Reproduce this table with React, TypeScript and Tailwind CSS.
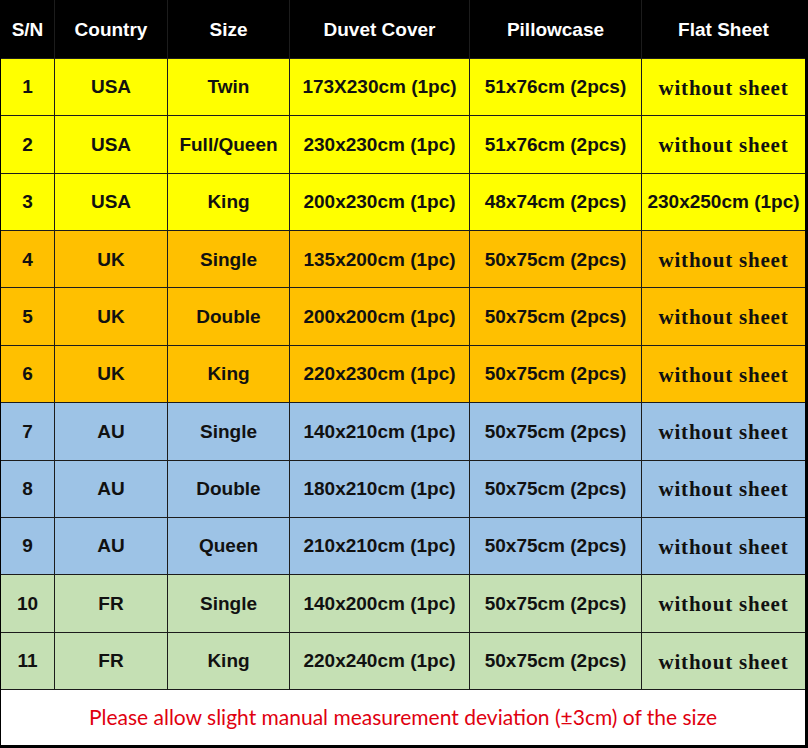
import React from 'react';

type Row = {
  sn: string;
  country: string;
  size: string;
  duvet: string;
  pillow: string;
  sheet: string;
  bg: string;
};

const rows: Row[] = [
  { sn: '1', country: 'USA', size: 'Twin', duvet: '173X230cm (1pc)', pillow: '51x76cm (2pcs)', sheet: 'without sheet', bg: 'bg-[#ffff00]' },
  { sn: '2', country: 'USA', size: 'Full/Queen', duvet: '230x230cm (1pc)', pillow: '51x76cm (2pcs)', sheet: 'without sheet', bg: 'bg-[#ffff00]' },
  { sn: '3', country: 'USA', size: 'King', duvet: '200x230cm (1pc)', pillow: '48x74cm (2pcs)', sheet: '230x250cm (1pc)', bg: 'bg-[#ffff00]' },
  { sn: '4', country: 'UK', size: 'Single', duvet: '135x200cm (1pc)', pillow: '50x75cm (2pcs)', sheet: 'without sheet', bg: 'bg-[#ffc000]' },
  { sn: '5', country: 'UK', size: 'Double', duvet: '200x200cm (1pc)', pillow: '50x75cm (2pcs)', sheet: 'without sheet', bg: 'bg-[#ffc000]' },
  { sn: '6', country: 'UK', size: 'King', duvet: '220x230cm (1pc)', pillow: '50x75cm (2pcs)', sheet: 'without sheet', bg: 'bg-[#ffc000]' },
  { sn: '7', country: 'AU', size: 'Single', duvet: '140x210cm (1pc)', pillow: '50x75cm (2pcs)', sheet: 'without sheet', bg: 'bg-[#9dc3e6]' },
  { sn: '8', country: 'AU', size: 'Double', duvet: '180x210cm (1pc)', pillow: '50x75cm (2pcs)', sheet: 'without sheet', bg: 'bg-[#9dc3e6]' },
  { sn: '9', country: 'AU', size: 'Queen', duvet: '210x210cm (1pc)', pillow: '50x75cm (2pcs)', sheet: 'without sheet', bg: 'bg-[#9dc3e6]' },
  { sn: '10', country: 'FR', size: 'Single', duvet: '140x200cm (1pc)', pillow: '50x75cm (2pcs)', sheet: 'without sheet', bg: 'bg-[#c5e0b4]' },
  { sn: '11', country: 'FR', size: 'King', duvet: '220x240cm (1pc)', pillow: '50x75cm (2pcs)', sheet: 'without sheet', bg: 'bg-[#c5e0b4]' },
];

const headers = ['S/N', 'Country', 'Size', 'Duvet Cover', 'Pillowcase', 'Flat Sheet'];

const sans = "font-['Liberation_Sans',Arial,sans-serif]";

export default function App() {
  return (
    <div className="w-[808px] h-[748px] bg-black pl-px pr-[3px] pb-[3px]">
      <div className="grid h-[745px] grid-cols-[53px_112px_121px_179px_171px_163px] grid-rows-[58px_repeat(11,1fr)_55px] gap-px bg-[#1c1c1c]">
        {headers.map((h) => (
          <div key={h} className={`flex items-center justify-center bg-black pt-[3px] text-[19px] font-bold text-white ${sans}`}>
            {h}
          </div>
        ))}

        {rows.map((r) => {
          const cells = [r.sn, r.country, r.size, r.duvet, r.pillow];
          return (
            <React.Fragment key={r.sn}>
              {cells.map((c, i) => (
                <div
                  key={i}
                  className={`flex items-center justify-center whitespace-nowrap pt-px text-[19px] font-bold text-[#111] ${r.bg} ${sans}`}
                >
                  {c}
                </div>
              ))}
              {r.sheet === 'without sheet' ? (
                <div
                  className={`flex items-center justify-center whitespace-nowrap pt-[3px] text-[21px] font-bold tracking-[0.8px] text-[#111] ${r.bg} font-['Liberation_Serif','Times_New_Roman',serif]`}
                >
                  {r.sheet}
                </div>
              ) : (
                <div
                  className={`flex items-center justify-center whitespace-nowrap pt-px text-[19px] font-bold text-[#111] ${r.bg} ${sans}`}
                >
                  {r.sheet}
                </div>
              )}
            </React.Fragment>
          );
        })}

        <div className="col-span-6 flex items-center justify-center bg-white pb-[2px] font-['Lato',sans-serif] text-[21px] text-[#e0000f]">
          Please allow slight manual measurement deviation (±3cm) of the size
        </div>
      </div>
    </div>
  );
}
